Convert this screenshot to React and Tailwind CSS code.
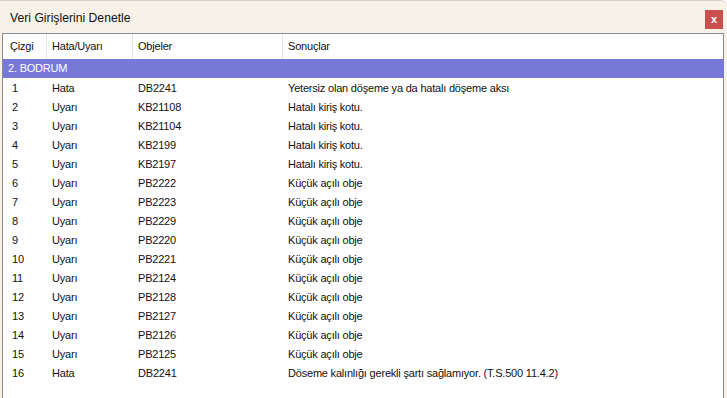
const rows = [
  [1, 'Hata', 'DB2241', 'Yetersiz olan döşeme ya da hatalı döşeme aksı'],
  [2, 'Uyarı', 'KB21108', 'Hatalı kiriş kotu.'],
  [3, 'Uyarı', 'KB21104', 'Hatalı kiriş kotu.'],
  [4, 'Uyarı', 'KB2199', 'Hatalı kiriş kotu.'],
  [5, 'Uyarı', 'KB2197', 'Hatalı kiriş kotu.'],
  [6, 'Uyarı', 'PB2222', 'Küçük açılı obje'],
  [7, 'Uyarı', 'PB2223', 'Küçük açılı obje'],
  [8, 'Uyarı', 'PB2229', 'Küçük açılı obje'],
  [9, 'Uyarı', 'PB2220', 'Küçük açılı obje'],
  [10, 'Uyarı', 'PB2221', 'Küçük açılı obje'],
  [11, 'Uyarı', 'PB2124', 'Küçük açılı obje'],
  [12, 'Uyarı', 'PB2128', 'Küçük açılı obje'],
  [13, 'Uyarı', 'PB2127', 'Küçük açılı obje'],
  [14, 'Uyarı', 'PB2126', 'Küçük açılı obje'],
  [15, 'Uyarı', 'PB2125', 'Küçük açılı obje'],
  [16, 'Hata', 'DB2241', 'Döseme kalınlığı gerekli şartı sağlamıyor. (T.S.500 11.4.2)'],
];

export default function App() {
  return (
    <div
      className="w-[727px] h-[398px] overflow-hidden bg-[#f8f1e7] border-t border-[#d4d0c8] rounded-tr-[6px] flex flex-col text-[#111]"
      style={{ fontFamily: '"Liberation Sans", Arial, sans-serif' }}
    >
      {/* title bar */}
      <div className="h-[32px] flex items-center justify-between pl-[10px] pr-[4px] shrink-0">
        <span className="text-[12.2px] mt-[2px]">Veri Girişlerini Denetle</span>
        <button className="w-[18px] h-[19px] bg-[#c9504f] text-white text-[11px] font-bold flex items-center justify-center mt-[4px] leading-none">
          x
        </button>
      </div>

      {/* list view */}
      <div className="flex-1 ml-[2px] mr-[3px] border border-b-0 border-[#8a8a92] bg-white flex flex-col text-[11px] tracking-[-0.2px]">
        <div className="h-[25px] flex shrink-0">
          <div className="w-[44px] pl-[7px] flex items-center border-r border-[#e5e5e5]">Çizgi</div>
          <div className="w-[86px] pl-[5px] flex items-center border-r border-[#e5e5e5]">Hata/Uyarı</div>
          <div className="w-[150px] pl-[5px] flex items-center border-r border-[#e5e5e5]">Objeler</div>
          <div className="flex-1 pl-[5px] flex items-center">Sonuçlar</div>
        </div>
        <div className="h-[19px] bg-[#7878d9] text-white pl-[5px] flex items-center mr-[-1px]">2. BODRUM</div>
        <div className="pt-[1px]">
          {rows.map(([n, t, o, s]) => (
            <div key={n} className="h-[19px] flex items-center">
              <div className="w-[44px] pl-[9px]">{n}</div>
              <div className="w-[86px] pl-[5px]">{t}</div>
              <div className="w-[150px] pl-[5px]">{o}</div>
              <div className="flex-1 pl-[5px]">{s}</div>
            </div>
          ))}
        </div>
      </div>
    </div>
  );
}
